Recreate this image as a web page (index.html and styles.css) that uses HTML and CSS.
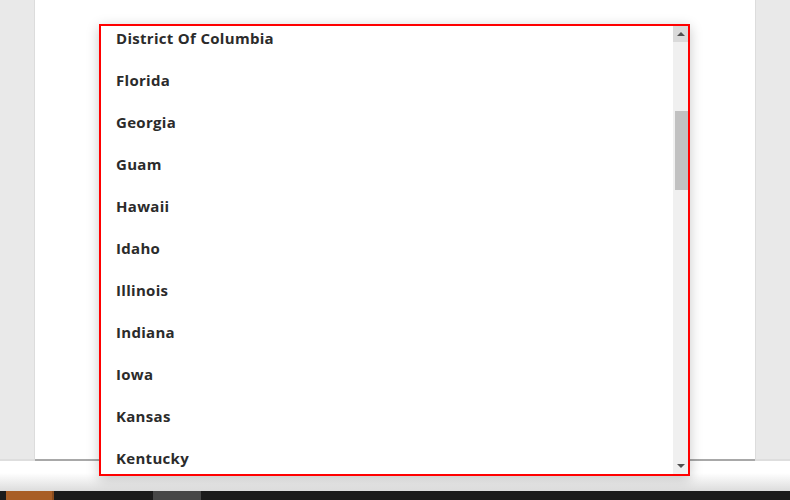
FILE: index.html
```html
<!DOCTYPE html>
<html>
<head>
<meta charset="utf-8">
<link rel="stylesheet" href="styles.css">
</head>
<body>
<div class="stage">
  <div class="gutter"></div>
  <div class="panel"></div>
  <div class="gutter"></div>
</div>
<div class="band"></div>
<div class="footer">
  <span class="seg seg-orange"></span>
  <span class="seg seg-gap"></span>
  <span class="seg seg-gray"></span>
</div>

<div class="dropdown">
  <ul class="list">
    <li>District Of Columbia</li>
    <li>Florida</li>
    <li>Georgia</li>
    <li>Guam</li>
    <li>Hawaii</li>
    <li>Idaho</li>
    <li>Illinois</li>
    <li>Indiana</li>
    <li>Iowa</li>
    <li>Kansas</li>
    <li>Kentucky</li>
  </ul>
  <div class="scrollbar">
    <div class="sb-btn"><span class="arrow-up"></span></div>
    <div class="sb-track">
      <div class="sb-thumb"></div>
    </div>
    <div class="sb-btn"><span class="arrow-down"></span></div>
  </div>
</div>
</body>
</html>
```
FILE: styles.css
```css
* { box-sizing: border-box; }
html, body { margin: 0; padding: 0; }
body {
  width: 790px;
  height: 500px;
  overflow: hidden;
  background: #ffffff;
  position: relative;
  font-family: "Open Sans", "Noto Sans", sans-serif;
}
.stage {
  display: flex;
  height: 461px;
}
.gutter {
  background: #e9e9e9;
  border-bottom: 2px solid #dedede;
}
.gutter:first-child { width: 35px; border-right: 1px solid #dcdcdc; }
.gutter:last-child { flex: 1; border-left: 1px solid #dcdcdc; }
.panel {
  width: 720px;
  background: #ffffff;
  border-bottom: 2px solid #a8a8a8;
}
.band {
  height: 30px;
  background: linear-gradient(to bottom, #ffffff 0%, #ffffff 40%, #dcdcdc 100%);
}
.footer {
  height: 9px;
  background: #1b1b1b;
  display: flex;
  padding-left: 6px;
}
.seg { display: block; height: 100%; }
.seg-orange { width: 48px; background: #a85e26; border-right: 2px solid #8a4c1e; }
.seg-gap { width: 99px; }
.seg-gray { width: 48px; background: #474747; }

.dropdown {
  position: absolute;
  left: 99px;
  top: 24px;
  width: 591px;
  height: 452px;
  border: 2px solid #ff0000;
  background: #ffffff;
  box-shadow: 0 3px 12px rgba(0, 0, 0, 0.22);
  display: flex;
  overflow: hidden;
}
.list {
  list-style: none;
  margin: -9px 0 0 0;
  padding: 0;
  flex: 1;
}
.list li {
  height: 42px;
  line-height: 42px;
  padding-left: 15px;
  font-size: 15px;
  font-weight: 700;
  color: #2b2b2b;
  letter-spacing: 0.3px;
}
.scrollbar {
  width: 15px;
  background: #f0f0f0;
  display: flex;
  flex-direction: column;
}
.sb-btn {
  height: 16px;
  display: flex;
  align-items: center;
  justify-content: center;
}
.sb-btn:first-child { background: #dadada; }
.sb-track {
  flex: 1;
  padding-top: 69px;
  padding-left: 2px;
}
.sb-thumb {
  width: 13px;
  height: 79px;
  background: #c1c1c1;
}
.arrow-up {
  width: 0; height: 0;
  border-left: 4px solid transparent;
  border-right: 4px solid transparent;
  border-bottom: 4px solid #505050;
}
.arrow-down {
  width: 0; height: 0;
  border-left: 4px solid transparent;
  border-right: 4px solid transparent;
  border-top: 4px solid #505050;
}
```
